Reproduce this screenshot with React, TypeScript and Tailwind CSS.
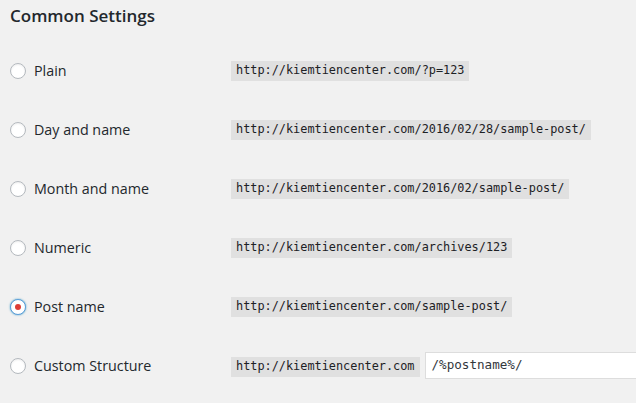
import React from "react";

const rows = [
  { label: "Plain", url: "http://kiemtiencenter.com/?p=123" },
  { label: "Day and name", url: "http://kiemtiencenter.com/2016/02/28/sample-post/" },
  { label: "Month and name", url: "http://kiemtiencenter.com/2016/02/sample-post/" },
  { label: "Numeric", url: "http://kiemtiencenter.com/archives/123" },
  { label: "Post name", url: "http://kiemtiencenter.com/sample-post/", checked: true },
];

function Radio({ checked }: { checked?: boolean }) {
  return (
    <span
      className={
        "flex h-4 w-4 shrink-0 items-center justify-center rounded-full border bg-white " +
        (checked
          ? "border-[#5b9dd9] shadow-[0_0_2px_rgba(30,140,190,0.8)]"
          : "border-[#b4b9be] shadow-[inset_0_1px_2px_rgba(0,0,0,0.07)]")
      }
    >
      {checked && <span className="h-[6px] w-[6px] rounded-full bg-[#dd3d36]" />}
    </span>
  );
}

const codeCls =
  "bg-[#e0e0e0] px-[5px] h-5 flex items-center text-[11.86px] text-[#1d2125] font-['DejaVu_Sans_Mono',monospace]";

export default function App() {
  return (
    <div className="min-h-[403px] w-[636px] overflow-hidden bg-[#f1f1f1] font-['Open_Sans',sans-serif] text-[#23282d]">
      <div className="h-[41px] pl-[10px] pt-[4px]">
        <h2 className="text-[17px] font-semibold leading-6">Common Settings</h2>
      </div>
      {rows.map((r) => (
        <div key={r.label} className="flex h-[59px] items-center">
          <div className="flex w-[231px] shrink-0 items-center gap-2 pl-[10px]">
            <Radio checked={r.checked} />
            <span className="text-[14.3px] leading-5">{r.label}</span>
          </div>
          <code className={codeCls}>{r.url}</code>
        </div>
      ))}
      <div className="flex h-[59px] items-center">
        <div className="flex w-[231px] shrink-0 items-center gap-2 pl-[10px]">
          <Radio />
          <span className="text-[14.3px] leading-5">Custom Structure</span>
        </div>
        <code className={codeCls + " mt-[3px]"}>http://kiemtiencenter.com</code>
        <div className="ml-[5px] flex h-[27px] w-[240px] shrink-0 items-center border border-[#dddddd] bg-white pl-[6px] font-['DejaVu_Sans_Mono',monospace] text-[12.6px] text-[#32373c]">
          /%postname%/
        </div>
      </div>
    </div>
  );
}
